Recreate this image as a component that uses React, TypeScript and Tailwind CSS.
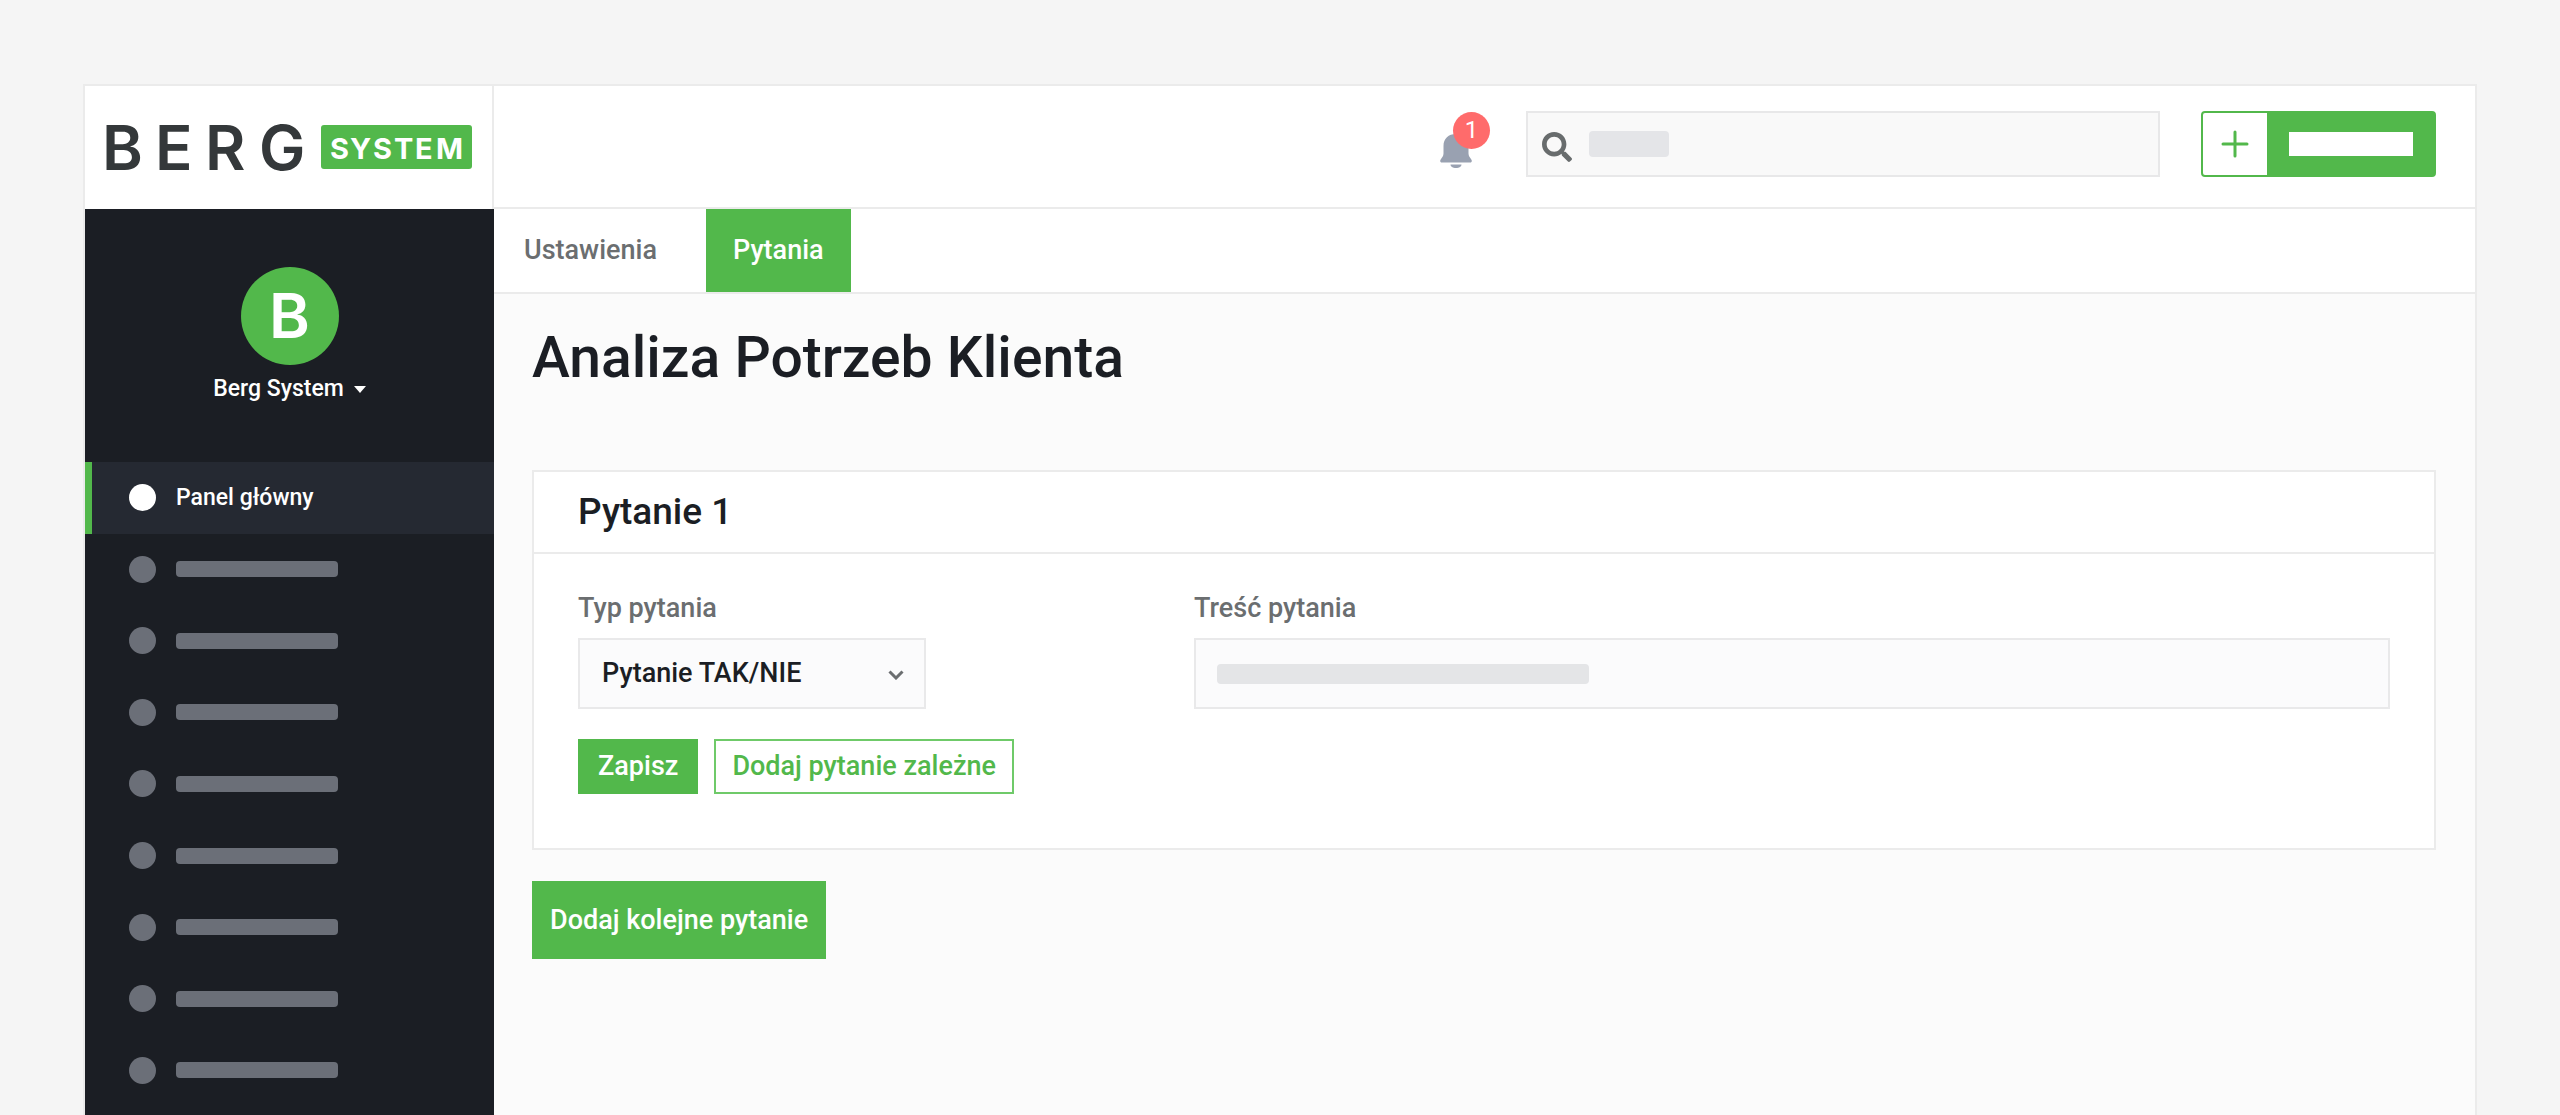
import { useState } from 'react';
import { FaSearch } from 'react-icons/fa';

const placeholderItems = [1, 2, 3, 4, 5, 6, 7, 8];

function Logo() {
  return (
    <svg
      viewBox="-5 -16 373 80"
      className="w-[373px] h-20"
      role="img"
      aria-label="Berg System"
      fontFamily="Inter, sans-serif"
    >
      <text x="-4 49 99 153" y="45" fontSize="62" fontWeight="600" fill="#34383a">BERG</text>
      <rect x="215" y="0" width="151" height="44" rx="3" fill="#52b84b" />
      <text x="224 244 267 288 309 330" y="34" fontSize="29" fontWeight="700" fill="#fff">SYSTEM</text>
    </svg>
  );
}

function Bell() {
  return (
    <svg viewBox="0 0 32 34" className="w-8 h-[34px]" fill="#99a1b1">
      <path d="M16 0C8.500 0 3.500 4.500 3.500 12v7.500c0 2.500-1.500 4-2.800 6C-.3 27 .2 28.500 1.800 28.500h28.400c1.600 0 2.100-1.500 1.100-3-1.300-2-2.800-3.500-2.800-6V12C28.500 4.500 23.500 0 16 0Z" />
      <path d="M10.500 30.500h11c0 2-2.300 3.500-5.500 3.500s-5.500-1.500-5.500-3.500Z" />
    </svg>
  );
}

function Header() {
  return (
    <header className="flex h-[123px] bg-white">
      <div className="w-[409px] shrink-0 border-r-2 border-[#ebebeb] pl-4 pt-[23px]">
        <a href="#" className="block"><Logo /></a>
      </div>
      <div className="flex-1 flex items-start justify-end pt-[25px] pr-[39px] border-b-2 border-[#ebebeb]">
        <button aria-label="Powiadomienia" className="relative w-8 mt-[23px] mr-[54px]">
          <Bell />
          <span className="absolute -top-[22px] left-[13px] w-[37px] h-[37px] rounded-full bg-[#ff6b6b] text-white text-2xl leading-[37px] text-center">
            1
          </span>
        </button>
        <div className="relative w-[634px] mr-[41px]">
          <input
            type="search"
            aria-label="Szukaj"
            className="block w-full h-[66px] bg-[#f9f9f9] border-2 border-[#e8e8e9] pl-[62px] pr-4 text-[27px] outline-none"
          />
          <FaSearch className="absolute left-4 top-[21px] w-[30px] h-[30px] text-[#686c6d] pointer-events-none" />
          <span className="absolute left-[63px] top-5 w-20 h-[26px] rounded-sm bg-[#e4e5e8] pointer-events-none" />
        </div>
        <button
          aria-label="Dodaj"
          className="flex w-[235px] h-[66px] rounded border-2 border-[#52b84b] bg-[#52b84b] overflow-hidden"
        >
          <span className="w-16 h-full bg-white flex items-center justify-center">
            <svg viewBox="0 0 28 28" className="w-7 h-7" stroke="#52b84b" strokeWidth="3" strokeLinecap="round">
              <path d="M14 2v24M2 14h24" />
            </svg>
          </span>
          <span className="flex-1 h-full flex items-center justify-center">
            <span className="w-[124px] h-6 bg-white" />
          </span>
        </button>
      </div>
    </header>
  );
}

function Sidebar() {
  return (
    <aside className="w-[409px] shrink-0 bg-[#1b1e24] text-white font-medium">
      <div className="flex flex-col items-center h-[253px] pt-[58px]">
        <div className="w-[98px] h-[98px] rounded-full bg-[#52b84b] flex items-center justify-center">
          <span className="font-[Inter,sans-serif] font-semibold text-[62px] leading-none">B</span>
        </div>
        <button className="flex items-center gap-[10px] mt-2 text-[23px] leading-8">
          Berg System
          <svg viewBox="0 0 12 7" className="w-3 h-[7px]" fill="currentColor">
            <path d="M0 0h12L6 7Z" />
          </svg>
        </button>
      </div>
      <nav className="grid auto-rows-fr h-[644px]">
        <a href="#" className="flex items-center bg-[#252932] border-l-[7px] border-[#52b84b] pl-[37px] text-[23px]">
          <span className="w-[27px] h-[27px] rounded-full bg-white mr-5" />
          Panel główny
        </a>
        {placeholderItems.map(item => (
          <a key={item} href="#" aria-label={`Pozycja ${item}`} className="flex items-center pl-11">
            <span className="w-[27px] h-[27px] rounded-full bg-[#6b6f78] mr-5" />
            <span className="w-[162px] h-4 rounded-sm bg-[#6b6f78]" />
          </a>
        ))}
      </nav>
    </aside>
  );
}

function QuestionCard() {
  const [type, setType] = useState('bool');

  return (
    <section className="mt-[72px] h-[380px] bg-white border-2 border-[#ebebeb]">
      <h2 className="h-[82px] border-b-2 border-[#ebebeb] px-11 text-[37px] leading-20 text-[#1b1e24]">Pytanie 1</h2>
      <div className="px-11 pt-[38px]">
        <div className="flex">
          <div className="w-[616px] shrink-0">
            <label htmlFor="type" className="block text-[27px] leading-8 text-[#6b6e70] mb-[14px]">Typ pytania</label>
            <div className="relative w-[348px]">
              <select
                id="type"
                value={type}
                onChange={e => setType(e.target.value)}
                className="block w-full h-[71px] appearance-none bg-[#fbfbfc] border-2 border-[#e9e9ea] px-[22px] text-[27px] text-[#1b1e24]"
              >
                <option value="bool">Pytanie TAK/NIE</option>
              </select>
              <svg
                viewBox="0 0 16 10"
                className="absolute right-[22px] top-8 w-4 h-[10px] pointer-events-none"
                fill="none"
                stroke="#6b6e70"
                strokeWidth="3"
              >
                <path d="m1.500 1.500 6.500 6.500 6.500-6.500" />
              </svg>
            </div>
          </div>
          <div className="flex-1">
            <label htmlFor="content" className="block text-[27px] leading-8 text-[#6b6e70] mb-[14px]">Treść pytania</label>
            <div className="relative">
              <input
                id="content"
                type="text"
                className="block w-full h-[71px] bg-[#fbfbfc] border-2 border-[#e9e9ea] px-[22px] text-[27px] outline-none"
              />
              <span className="absolute left-[23px] top-[26px] w-[372px] h-5 rounded-sm bg-[#e4e5e7] pointer-events-none" />
            </div>
          </div>
        </div>
        <div className="flex gap-4 mt-[30px]">
          <button className="h-[55px] px-5 bg-[#52b84b] text-white text-[27px]">Zapisz</button>
          <button className="h-[55px] px-4 bg-white border-2 border-[#6fca69] text-[#52b84b] text-[27px]">
            Dodaj pytanie zależne
          </button>
        </div>
      </div>
    </section>
  );
}

export default function App() {
  return (
    <div className="min-h-screen flex flex-col bg-[#f5f5f5] pt-21 px-[83px] font-[Roboto,sans-serif]">
      <div className="flex-1 flex flex-col border-2 border-b-0 border-[#ebebeb]">
        <Header />
        <div className="flex-1 flex">
          <Sidebar />
          <div className="flex-1 bg-[#fbfbfb] font-medium">
            <nav className="flex h-[85px] bg-white border-b-2 border-[#ebebeb] text-[27px]">
              <a href="#" className="flex items-center pl-[30px] pr-[49px] text-[#6b6e70]">Ustawienia</a>
              <a href="#" className="flex items-center px-[27px] bg-[#52b84b] text-white">Pytania</a>
            </nav>
            <main className="pl-[38px] pr-[39px] pt-6">
              <h1 className="text-[57px] leading-20 text-[#1b1e24]">Analiza Potrzeb Klienta</h1>
              <QuestionCard />
              <button className="h-[78px] px-[18px] mt-[31px] bg-[#52b84b] text-white text-[27px]">
                Dodaj kolejne pytanie
              </button>
            </main>
          </div>
        </div>
      </div>
    </div>
  );
}
